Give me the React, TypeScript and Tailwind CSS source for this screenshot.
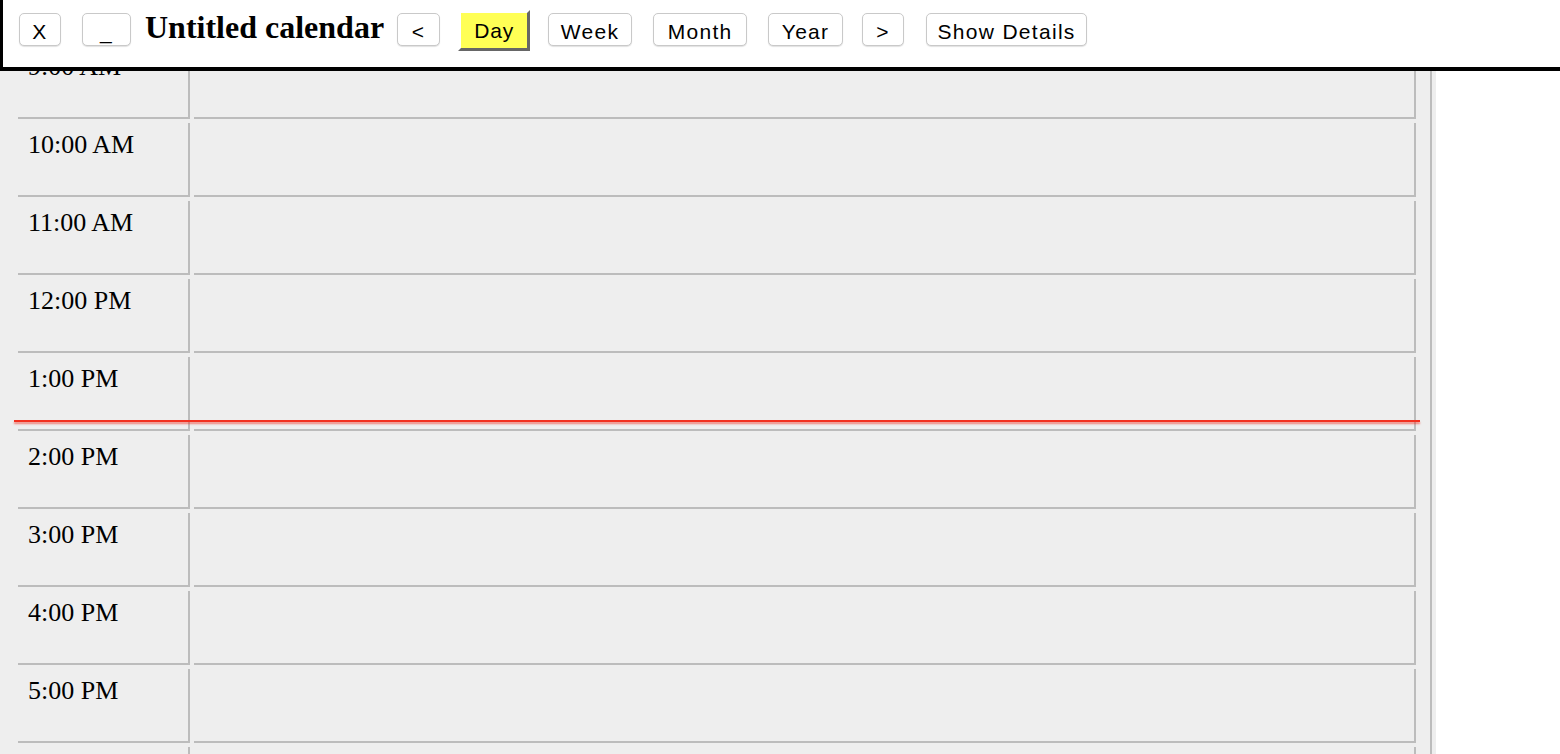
const HOURS = [
  '9:00 AM',
  '10:00 AM',
  '11:00 AM',
  '12:00 PM',
  '1:00 PM',
  '2:00 PM',
  '3:00 PM',
  '4:00 PM',
  '5:00 PM',
  '',
];

function Btn({ label, className }: { label: string; className: string }) {
  return (
    <button
      className={`mt-[13px] h-[33px] shrink-0 rounded-[5px] border border-[#c9c9c9] bg-white pt-[4px] text-center text-[21px] leading-[26px] tracking-[1.3px] text-black shadow-[0_1px_1px_rgba(0,0,0,0.12)] ${className}`}
    >
      {label}
    </button>
  );
}

export default function App() {
  return (
    <div className="relative h-[754px] w-full overflow-hidden bg-white">
      {/* toolbar */}
      <div className="absolute left-0 right-0 top-0 z-10 flex h-[71px] items-start border-b-4 border-l-[3px] border-black bg-white pl-[16px] font-['Liberation_Sans',Arial,sans-serif]">
        <Btn label="X" className="w-[42px]" />
        <Btn label="_" className="ml-[21px] w-[49px]" />
        <h1 className="ml-[14px] mt-[11px] shrink-0 font-['Liberation_Serif','Times_New_Roman',serif] text-[32px] font-bold leading-[32px] text-black">
          Untitled calendar
        </h1>
        <Btn label="<" className="ml-[13px] w-[43px]" />
        <button className="ml-[18px] mt-[10px] h-[41px] w-[72px] shrink-0 border-[3px] border-b-[#666] border-l-white border-r-[#666] border-t-white bg-[#ffff55] text-center text-[21px] leading-[35px] tracking-[0.8px] text-black">
          Day
        </button>
        <Btn label="Week" className="ml-[18px] w-[84px]" />
        <Btn label="Month" className="ml-[21px] w-[94px]" />
        <Btn label="Year" className="ml-[21px] w-[75px]" />
        <Btn label=">" className="ml-[19px] w-[42px]" />
        <Btn label="Show Details" className="ml-[22px] w-[161px]" />
      </div>

      {/* day grid */}
      <div className="h-full w-[1436px] bg-[#eeeeee]">
        <div className="relative h-full w-[1432px] border-r-2 border-[#bcbcbc] pl-[18px] pr-[14px] pt-[45px]">
          <div className="flex flex-col gap-[4px]">
            {HOURS.map((h, i) => (
              <div key={i} className="flex gap-[4px]">
                <div className="h-[74px] w-[172px] shrink-0 border-b-2 border-r-2 border-[#bcbcbc] pl-[10px] pt-[2px] font-['Liberation_Serif','Times_New_Roman',serif] text-[26px] leading-normal text-black">
                  {h}
                </div>
                <div className="h-[74px] flex-1 border-b-2 border-r-2 border-[#bcbcbc]" />
              </div>
            ))}
          </div>
          {/* current time marker */}
          <div className="absolute left-[14px] top-[420px] h-[2px] w-[1406px] bg-[#f2301f] shadow-[0_2px_2px_rgba(242,48,31,0.6)]" />
        </div>
      </div>
    </div>
  );
}
